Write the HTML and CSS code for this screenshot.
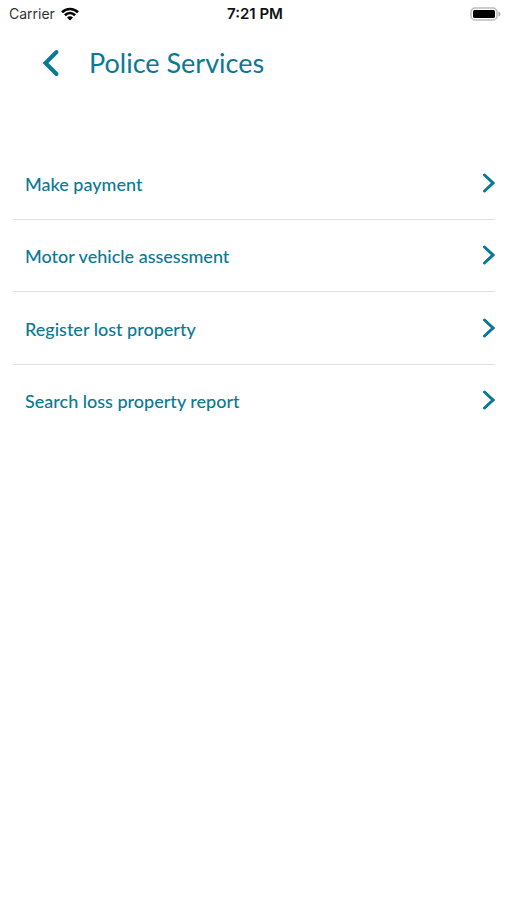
FILE: index.html
```html
<!DOCTYPE html>
<html lang="en">
<head>
  <meta charset="utf-8">
  <meta name="viewport" content="width=device-width, initial-scale=1">
  <title>Police Services</title>
  <link rel="stylesheet" href="styles.css">
</head>
<body>
  <div class="status">
    <div class="carrier">
      <span>Carrier</span>
      <svg class="wifi" viewBox="0 0 18 14" aria-hidden="true">
        <path d="M1 5.3C5.6.8 12.4.8 17 5.3"/>
        <path d="M3.9 8.3c3-2.9 7.2-2.9 10.2 0"/>
        <path class="solid" d="M6 10.5c1.8-1.6 4.2-1.6 6 0l-3 3z"/>
      </svg>
    </div>
    <div class="clock">7:21 PM</div>
    <svg class="battery" viewBox="0 0 31 14" aria-hidden="true">
      <rect class="case" x="1" y="1" width="26" height="12" rx="4"/>
      <rect class="charge" x="3" y="3" width="22" height="8" rx="1.5"/>
      <path class="tip" d="M28.5 4.5c2.6 1 2.6 4 0 5z"/>
    </svg>
  </div>
  <header class="header">
    <button class="back" type="button" aria-label="Back">
      <svg viewBox="0 0 18 28" aria-hidden="true"><path d="M14.500 3L3.500 14l11 11"/></svg>
    </button>
    <h1>Police Services</h1>
  </header>
  <nav class="services">
    <a href="#payment"><span>Make payment</span><svg viewBox="0 0 14 22" aria-hidden="true"><path d="M3.500 2l8.500 8-8.500 8"/></svg></a>
    <a href="#vehicle"><span>Motor vehicle assessment</span><svg viewBox="0 0 14 22" aria-hidden="true"><path d="M3.500 2l8.500 8-8.500 8"/></svg></a>
    <a href="#register"><span>Register lost property</span><svg viewBox="0 0 14 22" aria-hidden="true"><path d="M3.500 2l8.500 8-8.500 8"/></svg></a>
    <a href="#search"><span>Search loss property report</span><svg viewBox="0 0 14 22" aria-hidden="true"><path d="M3.500 2l8.500 8-8.500 8"/></svg></a>
  </nav>
</body>
</html>
```
FILE: styles.css
```css
* {
  box-sizing: border-box;
}

body {
  margin: 0;
  background: #fff;
  color: #0b7896;
  font-family: "Gill Sans", Lato, sans-serif;
}

svg {
  display: block;
  flex: none;
  fill: none;
  stroke: currentColor;
}

.status {
  display: grid;
  grid-template-columns: 1fr auto 1fr;
  align-items: center;
  height: 27px;
  padding: 0 6px 0 9px;
  color: #111;
  font: 14px/27px Inter, sans-serif;
}

.carrier {
  display: flex;
  align-items: center;
  gap: 6px;
  color: #333;
}

.wifi {
  width: 18px;
  height: 14px;
  color: #000;
  stroke-width: 2.6;
}

.wifi .solid {
  fill: #000;
  stroke: none;
}

.clock {
  font-size: 15px;
  font-weight: 600;
}

.battery {
  justify-self: end;
  width: 31px;
  height: 14px;
}

.case {
  stroke: #bdbdbd;
  stroke-width: 1.5;
}

.charge {
  fill: #000;
  stroke: none;
}

.tip {
  fill: #aaa;
  stroke: none;
}

.header {
  display: flex;
  align-items: center;
  gap: 19px;
  height: 72px;
  padding: 0 32px;
}

.back {
  padding: 0 10px;
  border: 0;
  background: none;
  color: inherit;
}

.back svg {
  width: 18px;
  height: 28px;
  stroke-width: 4;
  stroke-linecap: round;
}

.header h1 {
  margin: 0;
  font-size: 27px;
  font-weight: 400;
  line-height: 36px;
}

.services {
  display: grid;
  grid-template-rows: repeat(4, 1fr);
  height: 290px;
  margin: 48px 12px 0 13px;
}

.services a {
  display: flex;
  align-items: center;
  justify-content: space-between;
  padding: 2px 0 0 12px;
  border-bottom: 1px solid #e0e0e0;
  color: inherit;
  font-size: 18px;
  font-weight: 500;
  line-height: 24px;
  text-decoration: none;
}

.services a:last-child {
  border-bottom-color: transparent;
}

.services svg {
  width: 14px;
  height: 22px;
  stroke-width: 3;
  stroke-linecap: round;
}
```
